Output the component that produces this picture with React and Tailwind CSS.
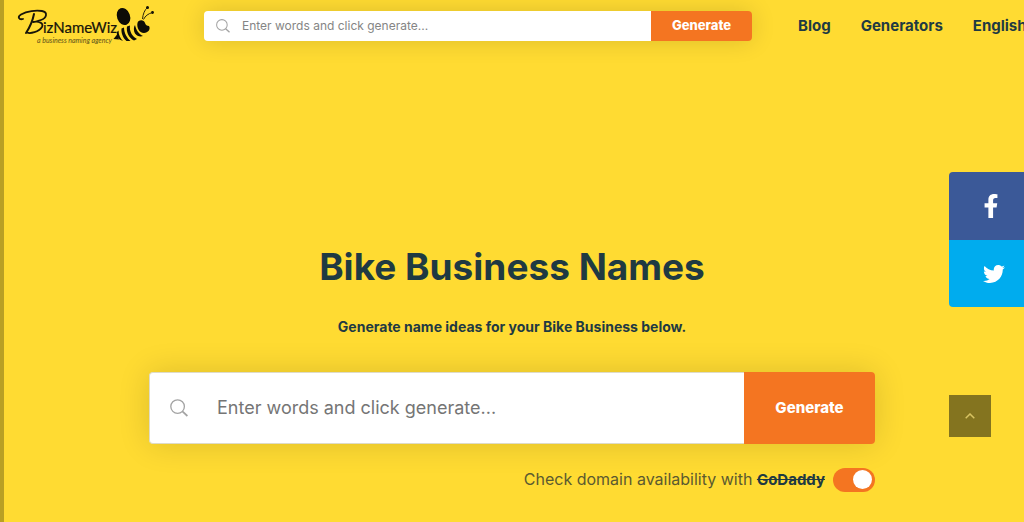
import { useState } from "react";
import { FaFacebookF, FaTwitter } from "react-icons/fa";

function SearchIcon({ className }) {
  return (
    <svg viewBox="0 0 18 18" fill="none" stroke="#a3a3a3" strokeWidth="1.3" className={className} aria-hidden="true">
      <circle cx="7.6" cy="7.6" r="6.8" />
      <path d="M12.4 12.4 17.4 17" strokeWidth="1.7" />
    </svg>
  );
}

function Logo() {
  return (
    <svg viewBox="0 0 140 42" className="h-[42px] w-[140px]" role="img" aria-label="BizNameWiz, a business naming agency">
      <g fill="none" stroke="#17150a" strokeLinecap="round" strokeLinejoin="round">
        <path d="M7 14C3 15 1 12 5 9.500C11 6 20 5 26 6C32 7 31 13 25 15C22 16 19 17 17 17C23 16 28 18 26 22C23 27 14 29 11 27.500" strokeWidth="1.800" />
        <path d="M18 9C17 14 14 22 10 28" strokeWidth="2" />
      </g>
      <text x="27" y="28" fontFamily="Lato, sans-serif" fontSize="15" fill="#17150a" stroke="#17150a" strokeWidth="0.2">izNameWiz</text>
      <text x="21" y="38" fontFamily="Lato, sans-serif" fontStyle="italic" fontSize="7" fill="#5c511a">a business naming agency</text>
      <g fill="#0d0c06">
        <ellipse cx="107.500" cy="11.500" rx="6.500" ry="8.800" transform="rotate(-20 107.500 11.500)" />
        <path d="M121.500 18C122 14.500 128 14 129 18C129.500 20 131 21 133 21C135 24 132 28 128 28C123 28 120.500 22 121.500 18Z" />
        <path d="M119 20C120 25 123 29 127 31C124 32 121 31 119 28.500C117.500 26 117.500 22 119 20Z" />
        <path d="M114 20.500C113 27 117 32 121 34L118 35.500C113 33 110 27 111 21.500Z" />
        <path d="M108 22.500C108 28 111 33 114.500 36L110.500 36C107 33 105 28 105.500 23.500Z" />
        <path d="M102.500 25.500C102.500 30 104.500 33.500 107 36L103.500 34.500C101 32 100.500 29 101 27Z" />
        <path d="M101.500 29L97.500 34L103 34.500Z" />
        <circle cx="131.500" cy="2.500" r="1.500" />
        <circle cx="136.500" cy="7.500" r="1.400" />
      </g>
      <path d="M126.500 14C127 9 128.500 5 131.500 2.500M127.500 14.500C129 11 132.500 8.500 136.500 7.500" fill="none" stroke="#27220c" strokeWidth="1" />
    </svg>
  );
}

export default function App() {
  const [domains, setDomains] = useState(true);
  return (
    <div className="min-h-screen overflow-hidden border-l-4 border-[#b9a024] bg-[#ffdb32] font-['Inter','Open_Sans',sans-serif] text-[#1f3a42]">
      <header className="flex h-[52px] items-center pl-3">
        <a href="#home" className="shrink-0">
          <Logo />
        </a>
        <form
          onSubmit={(e) => e.preventDefault()}
          className="ml-12 flex h-[30px] min-w-0 flex-1 rounded shadow-[0_0_24px_rgba(0,0,0,0.14)]"
        >
          <label className="flex min-w-0 flex-1 items-center gap-3 rounded-l bg-white pl-3">
            <SearchIcon className="size-[14px] shrink-0" />
            <input
              type="text"
              aria-label="Search words"
              placeholder="Enter words and click generate..."
              className="min-w-0 flex-1 bg-transparent text-xs outline-none placeholder:text-[#858585]"
            />
          </label>
          <button type="submit" className="w-[101px] rounded-r bg-[#f47521] text-[13px] font-extrabold text-white">
            Generate
          </button>
        </form>
        <nav className="ml-[46px] flex w-[226px] shrink-0 gap-[30px] text-[15px] font-bold">
          <a href="#blog">Blog</a>
          <a href="#generators">Generators</a>
          <a href="#english">English</a>
        </nav>
      </header>

      <main className="mx-auto flex max-w-[726px] -translate-x-0.5 flex-col pt-[191px]">
        <h1 className="text-center text-[37px] leading-[48px] font-bold">Bike Business Names</h1>
        <p className="mt-[26px] text-center text-sm leading-5 font-bold">Generate name ideas for your Bike Business below.</p>
        <form
          onSubmit={(e) => e.preventDefault()}
          className="mt-[35px] flex h-[72px] rounded shadow-[0_0_32px_rgba(0,0,0,0.14)]"
        >
          <label className="flex min-w-0 flex-1 items-center gap-[29px] rounded-l border border-r-0 border-[#dedbc8] bg-white pl-5">
            <SearchIcon className="size-[18px] shrink-0" />
            <input
              type="text"
              aria-label="Business name words"
              placeholder="Enter words and click generate..."
              className="min-w-0 flex-1 bg-transparent text-lg outline-none placeholder:text-[#757575]"
            />
          </label>
          <button type="submit" className="w-[131px] rounded-r bg-[#f47521] text-[15px] font-extrabold text-white">
            Generate
          </button>
        </form>
        <div className="mt-[23px] flex items-center justify-end gap-2">
          <label htmlFor="domains" className="text-base leading-6 text-[#5b5a30]">
            Check domain availability with <s className="text-[15px] font-bold text-[#1f3a42]">GoDaddy</s>
          </label>
          <input
            id="domains"
            type="checkbox"
            role="switch"
            checked={domains}
            onChange={(e) => setDomains(e.target.checked)}
            className="flex h-6 w-[42px] appearance-none items-center rounded-full bg-[#a89a56] px-[3px] before:size-[19px] before:rounded-full before:bg-white checked:justify-end checked:bg-[#f47521]"
          />
        </div>
      </main>

      <aside className="fixed top-[172px] right-0 flex w-[75px] flex-col overflow-hidden rounded-l text-white">
        <a href="#facebook" aria-label="Facebook" className="flex h-[68px] items-center bg-[#3b5998] pl-[30px]">
          <FaFacebookF className="size-6" />
        </a>
        <a href="#twitter" aria-label="Twitter" className="flex h-[67px] items-center bg-[#00acee] pl-[34px]">
          <FaTwitter className="size-[22px]" />
        </a>
      </aside>
      <button
        type="button"
        aria-label="Back to top"
        className="fixed top-[395px] right-[33px] flex size-[42px] items-center justify-center bg-[#84741f]"
      >
        <svg viewBox="0 0 10 6" fill="none" stroke="#d8c362" strokeWidth="1.500" className="h-[6px] w-[10px]" aria-hidden="true">
          <path d="M.7 5.300 5 1l4.300 4.300" />
        </svg>
      </button>
    </div>
  );
}
